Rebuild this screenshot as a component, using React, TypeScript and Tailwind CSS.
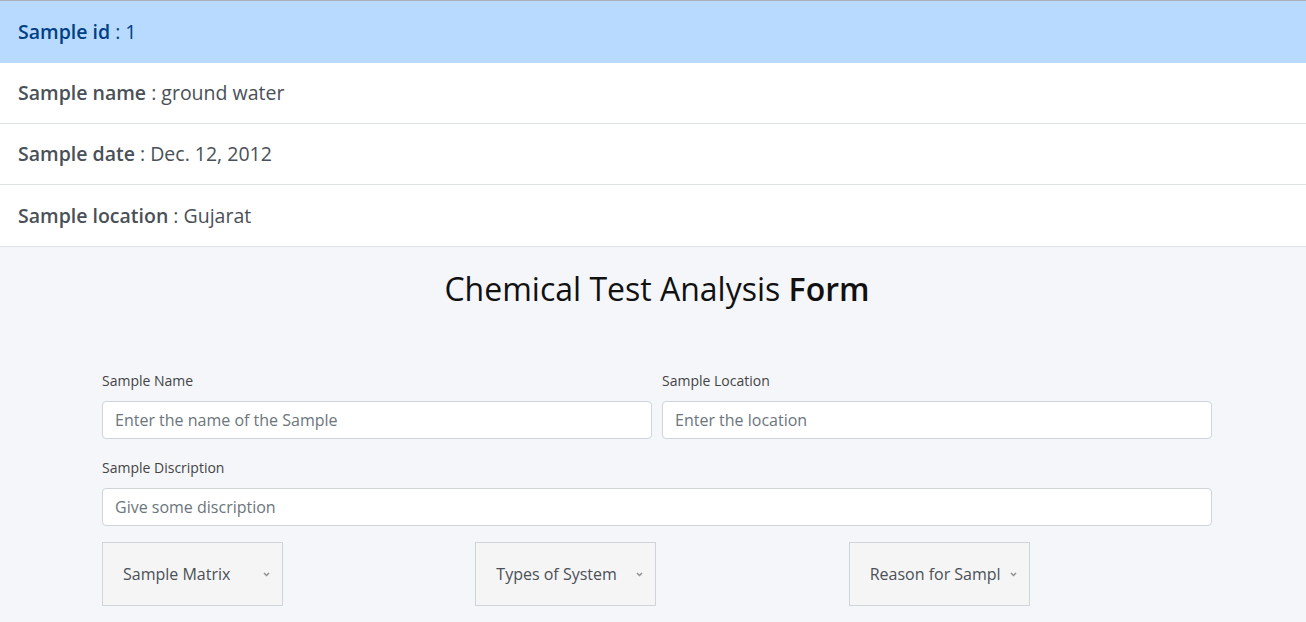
import React from "react";

const rows = [
  { label: "Sample id", value: "1", active: true, h: "h-[62px]" },
  { label: "Sample name", value: "ground water", h: "h-[61px]" },
  { label: "Sample date", value: "Dec. 12, 2012", h: "h-[61px]" },
  { label: "Sample location", value: "Gujarat", h: "h-[62px]" },
];

function Chevron() {
  return (
    <svg width="7" height="5" viewBox="0 0 7 5" className="absolute right-[12px] top-[29px]">
      <path d="M1 1 L3.5 3.5 L6 1" fill="none" stroke="#909090" strokeWidth="1.5" />
    </svg>
  );
}

function SelectBox({ text }: { text: string }) {
  return (
    <div className="relative w-[181px] h-[64px] border border-[#ced4da] bg-[#f6f5f5] flex items-center pl-[20px] pr-[28px] text-[16px] text-[#495057]">
      <span className="block whitespace-nowrap overflow-hidden">{text}</span>
      <Chevron />
    </div>
  );
}

export default function App() {
  return (
    <div className="min-h-screen bg-[#f5f6fa]" style={{ fontFamily: '"Open Sans", "Noto Sans", sans-serif' }}>
      <div className="border-t border-[#a9b0b8] bg-white">
        {rows.map((r) => (
          <div
            key={r.label}
            className={
              r.active
                ? `${r.h} flex items-center px-[18px] text-[19.5px] bg-[#b8daff] text-[#004085] border-b border-[#b8daff]`
                : `${r.h} flex items-center px-[18px] text-[19.5px] bg-white text-[#495057] border-b border-[#dee2e6]`
            }
          >
            <span className="font-semibold">{r.label}</span>
            <span>&nbsp;: {r.value}</span>
          </div>
        ))}
      </div>
      <div className="pt-[23px] pb-10">
        <h1 className="text-center text-[32px] leading-[38px] text-[#111] pl-[8px]">
          Chemical Test Analysis <span className="font-semibold">Form</span>
        </h1>
        <div className="w-[1110px] ml-[102px] mt-[63px]">
          <div className="flex gap-[10px]">
            <div className="flex-1">
              <label className="block text-[14px] leading-[20px] text-[#444] mb-[10px]">Sample Name</label>
              <div className="h-[38px] border border-[#ced4da] rounded-[4px] bg-white flex items-center px-[12px] text-[16px] text-[#6c757d]">
                Enter the name of the Sample
              </div>
            </div>
            <div className="flex-1">
              <label className="block text-[14px] leading-[20px] text-[#444] mb-[10px]">Sample Location</label>
              <div className="h-[38px] border border-[#ced4da] rounded-[4px] bg-white flex items-center px-[12px] text-[16px] text-[#6c757d]">
                Enter the location
              </div>
            </div>
          </div>
          <div className="mt-[19px]">
            <label className="block text-[14px] leading-[20px] text-[#444] mb-[10px]">Sample Discription</label>
            <div className="h-[38px] border border-[#ced4da] rounded-[4px] bg-white flex items-center px-[12px] text-[16px] text-[#6c757d]">
              Give some discription
            </div>
          </div>
          <div className="mt-[16px] grid grid-cols-3 -mx-[5px]">
            <div className="px-[5px]"><SelectBox text="Sample Matrix" /></div>
            <div className="px-[5px]"><SelectBox text="Types of System" /></div>
            <div className="px-[5px]"><SelectBox text="Reason for Sampling" /></div>
          </div>
        </div>
      </div>
    </div>
  );
}
